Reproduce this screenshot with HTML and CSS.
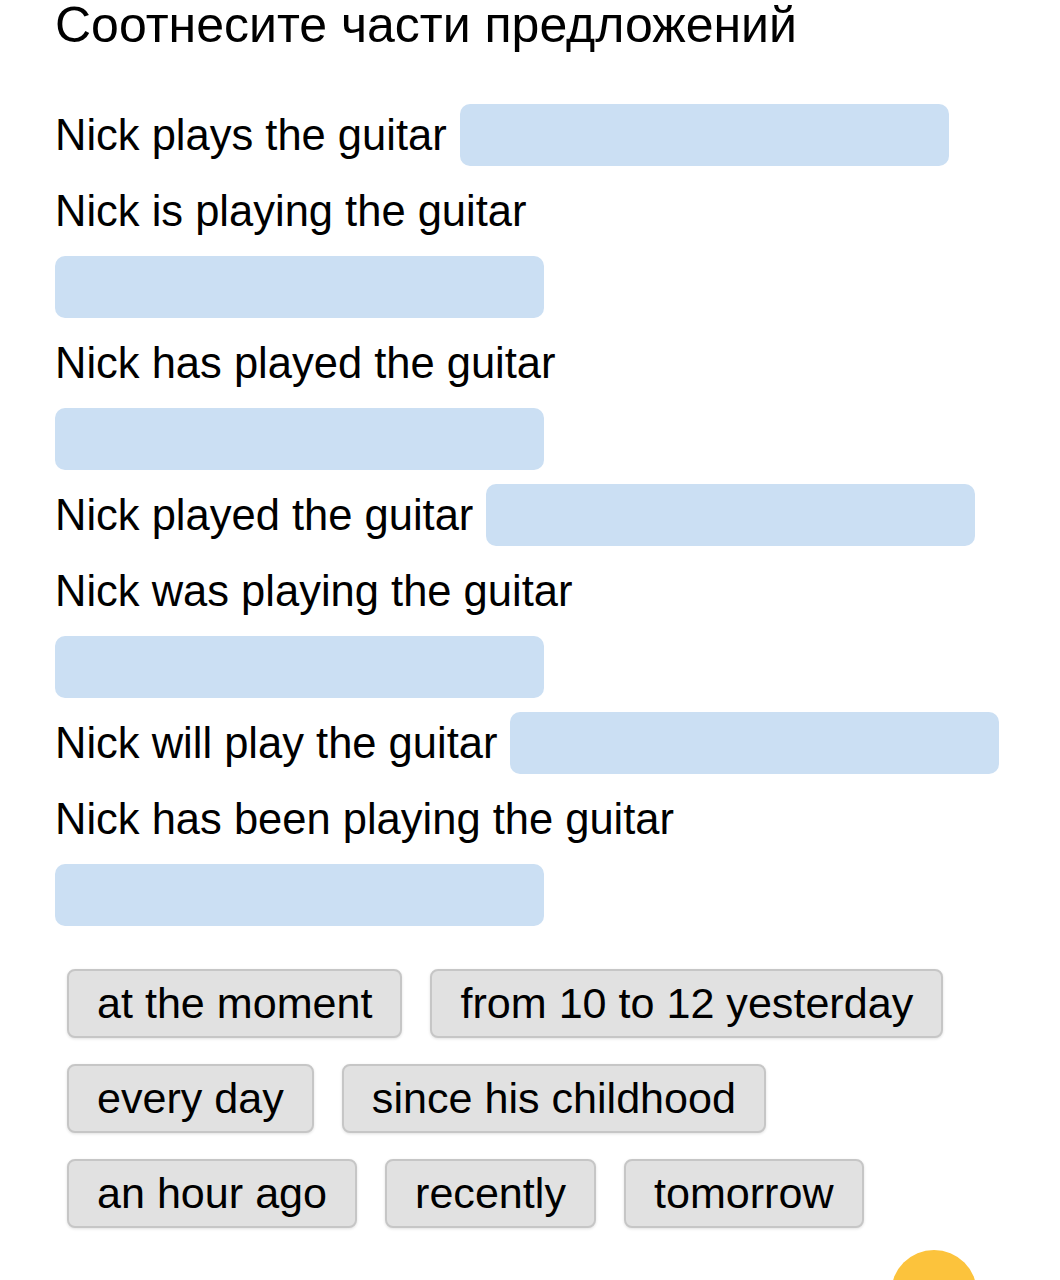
FILE: index.html
```html
<!DOCTYPE html>
<html lang="ru">
<head>
<meta charset="utf-8">
<title>Соотнесите части предложений</title>
<link rel="stylesheet" href="styles.css">
</head>
<body>
<main class="page">
  <h1 class="title">Соотнесите части предложений</h1>
  <div class="sentences">
    <div class="sentence"><span class="text">Nick plays the guitar</span><span class="drop"></span></div>
    <div class="sentence"><span class="text">Nick is playing the guitar</span><span class="drop"></span></div>
    <div class="sentence"><span class="text">Nick has played the guitar</span><span class="drop"></span></div>
    <div class="sentence"><span class="text">Nick played the guitar</span><span class="drop"></span></div>
    <div class="sentence"><span class="text">Nick was playing the guitar</span><span class="drop"></span></div>
    <div class="sentence"><span class="text">Nick will play the guitar</span><span class="drop"></span></div>
    <div class="sentence"><span class="text">Nick has been playing the guitar</span><span class="drop"></span></div>
  </div>
  <div class="chips">
    <span class="chip">at the moment</span>
    <span class="chip">from 10 to 12 yesterday</span>
    <span class="chip">every day</span>
    <span class="chip">since his childhood</span>
    <span class="chip">an hour ago</span>
    <span class="chip">recently</span>
    <span class="chip">tomorrow</span>
  </div>
</main>
<button class="fab" aria-label="Проверить"></button>
</body>
</html>
```

FILE: styles.css
```css
html, body {
  margin: 0;
  padding: 0;
  background: #ffffff;
}

body {
  font-family: "Liberation Sans", Arial, sans-serif;
  color: #000000;
  overflow: hidden;
  height: 1280px;
}

.page {
  padding: 0 55px;
}

.title {
  margin: 0 0 47px 0;
  font-size: 50px;
  font-weight: 400;
  line-height: 50px;
}

.sentences {
  display: flex;
  flex-direction: column;
}

.sentence {
  display: flex;
  flex-wrap: wrap;
  align-items: center;
  column-gap: 13px;
}

.text {
  font-size: 43.5px;
  line-height: 76px;
  white-space: nowrap;
}

.drop {
  display: block;
  width: 489px;
  height: 62px;
  margin: 7px 0;
  background: #cbdff3;
  border-radius: 10px;
}

.chips {
  display: flex;
  flex-wrap: wrap;
  column-gap: 28px;
  row-gap: 26px;
  padding-left: 12px;
  margin-top: 36px;
}

.chip {
  display: flex;
  align-items: center;
  height: 65px;
  padding: 0 28px;
  font-size: 43.1px;
  background: #e1e1e1;
  border: 2px solid #c6c6c6;
  border-radius: 8px;
  box-shadow: 0 1px 3px rgba(0, 0, 0, 0.12);
  white-space: nowrap;
}

.fab {
  position: fixed;
  left: 891px;
  top: 1250px;
  width: 86px;
  height: 86px;
  padding: 0;
  border: none;
  border-radius: 50%;
  background: #fcc33c;
}
```
